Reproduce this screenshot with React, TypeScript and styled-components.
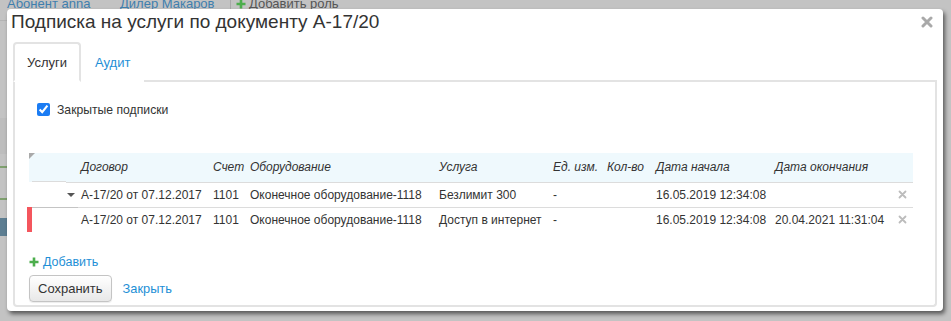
import React from "react";
import styled, { createGlobalStyle } from "styled-components";

const Global = createGlobalStyle`
  html, body { margin: 0; padding: 0; }
  body {
    width: 951px; height: 321px; overflow: hidden;
    font-family: "Liberation Sans", Arial, Helvetica, sans-serif;
    color: #333;
    background: #c4c4c4;
  }
`;

const Page = styled.div`
  position: relative;
  width: 951px;
  height: 321px;
  overflow: hidden;
  background: #c3c3c3;
`;

const BackTop = styled.div`
  display: flex;
  align-items: flex-end;
  height: 9px;
  overflow: hidden;
  font-size: 13px;
  line-height: 16px;
`;

const BackLink = styled.span<{ $w: number; $ml?: number }>`
  color: #3f7fae;
  width: ${(p) => p.$w}px;
  margin-left: ${(p) => p.$ml ?? 0}px;
  flex: none;
  margin-bottom: -3px;
`;

const BackButton = styled.span`
  color: #555;
  border-left: 1px solid #a8a8a8;
  padding-left: 5px;
  margin-bottom: -3px;
  display: flex;
  align-items: center;
  gap: 3px;
`;

const BackLeft = styled.div`
  width: 7px;
  display: flex;
  flex-direction: column;
`;

const BackLine = styled.div<{ $h: number; $c: string; $mt: number }>`
  height: ${(p) => p.$h}px;
  background: ${(p) => p.$c};
  margin-top: ${(p) => p.$mt}px;
`;

const Modal = styled.div`
  position: absolute;
  left: 7px;
  top: 9px;
  width: 926px;
  height: 298px;
  padding: 0 5px 4px 5px;
  background: #fff;
  border-radius: 4px;
  box-shadow: 2px 3px 4px rgba(0, 0, 0, 0.55);
  display: flex;
  flex-direction: column;
`;

const Header = styled.div`
  display: flex;
  justify-content: space-between;
  align-items: flex-start;
  height: 33px;
`;

const Title = styled.h3`
  margin: 1px 0 0 -1px;
  font-size: 19px;
  line-height: 24px;
  font-weight: normal;
  color: #333;
`;

const CloseBtn = styled.button`
  border: 0;
  background: none;
  padding: 0;
  margin: 7px 5px 0 0;
  width: 12px;
  height: 12px;
  display: flex;
  cursor: pointer;
`;

const TabBar = styled.div`
  display: flex;
  border-bottom: 2px solid #e3e3e3;
  margin: 0 1px;
  height: 38px;
`;

const Tab = styled.div<{ $active?: boolean }>`
  box-sizing: border-box;
  height: 40px;
  padding: 1px 12px 0 12px;
  display: flex;
  align-items: center;
  font-size: 13px;
  margin-bottom: -2px;
  color: ${(p) => (p.$active ? "#333" : "#1e8fd6")};
  background: #fff;
  border: 2px solid ${(p) => (p.$active ? "#e3e3e3" : "transparent")};
  border-bottom: 2px solid ${(p) => (p.$active ? "#fff" : "transparent")};
  border-radius: 4px 4px 0 0;
`;

const Panel = styled.div`
  flex: 1;
  margin: 0 1px;
  border: 2px solid #e3e3e3;
  border-top: 0;
  border-radius: 0 0 4px 4px;
  display: flex;
  flex-direction: column;
  padding: 0 0 3px 0;
`;

const CheckRow = styled.label`
  display: flex;
  align-items: center;
  gap: 7px;
  margin: 21px 0 0 22px;
  height: 13px;
  font-size: 12.2px;
`;

const Check = styled.input`
  margin: 0;
  width: 13px;
  height: 13px;
  accent-color: #1b7cf3;
`;

const Table = styled.table`
  margin: 37px 0 0 14px;
  width: 884px;
  border-collapse: collapse;
  table-layout: fixed;
  font-size: 12px;
`;

const HeadRow = styled.tr`
  background: #eff9fd;
  height: 29px;
`;

const Th = styled.th`
  text-align: left;
  font-weight: normal;
  font-style: italic;
  padding: 0 0 0 3px;
  border-bottom: 1px solid #dcdcdc;
  white-space: nowrap;
  color: #333;
`;

const CornerTh = styled.th`
  padding: 0;
  vertical-align: top;
  background: linear-gradient(#dcdcdc, #dcdcdc) no-repeat 3px 100% / calc(100% - 3px) 1px;
`;

const Corner = styled.div`
  width: 0;
  height: 0;
  border-top: 6px solid #a9a9a9;
  border-right: 6px solid transparent;
`;

const Row = styled.tr`
  height: 25px;
`;

const Td = styled.td<{ $top?: boolean }>`
  padding: 0 0 0 3px;
  white-space: nowrap;
  border-top: ${(p) => (p.$top ? "1px solid #dcdcdc" : "0")};
  color: #333;
`;

const MarkTd = styled.td<{ $top?: boolean }>`
  padding: 0;
  ${(p) =>
    p.$top
      ? "background: linear-gradient(#c4c4c4, #c4c4c4) no-repeat 3px 0 / calc(100% - 3px) 1px;"
      : ""}
`;

const CaretTd = styled.td<{ $top?: boolean }>`
  padding: 0;
  border-top: ${(p) => (p.$top ? "1px solid #c4c4c4" : "0")};
`;

const Marker = styled.div`
  width: 5px;
  height: 25px;
  margin-left: -2px;
  background: #f4565d;
`;

const Caret = styled.div`
  width: 0;
  height: 0;
  margin-left: 1px;
  border-left: 4px solid transparent;
  border-right: 4px solid transparent;
  border-top: 4px solid #555;
`;

const DelTd = styled(Td)`
  padding: 0 0 0 8px;
`;

const Del = styled.button`
  border: 0;
  background: none;
  padding: 0;
  display: flex;
  cursor: pointer;
`;

const AddLink = styled.a`
  display: flex;
  align-items: center;
  gap: 4px;
  margin: 22px 0 0 14px;
  font-size: 12.5px;
  line-height: 16px;
  color: #1e8fd6;
  text-decoration: none;
  width: max-content;
`;

const Actions = styled.div`
  display: flex;
  align-items: center;
  gap: 11px;
  margin: 5px 0 0 14px;
`;

const Button = styled.button`
  font-family: inherit;
  font-size: 13px;
  color: #333;
  height: 27px;
  padding: 0 8px;
  border: 1px solid #c4c4c4;
  border-radius: 4px;
  background: linear-gradient(#ffffff, #e8e8e8);
  box-shadow: 0 1px 1px rgba(0, 0, 0, 0.08);
`;

const Link = styled.a`
  font-size: 12.8px;
  color: #1e8fd6;
  text-decoration: none;
`;

const XIcon = ({ size, color, w }: { size: number; color: string; w: number }) => (
  <svg width={size} height={size} viewBox="0 0 12 12">
    <path d="M2 2 L10 10 M10 2 L2 10" stroke={color} strokeWidth={w} strokeLinecap="round" />
  </svg>
);

const Plus = () => (
  <svg width="10" height="10" viewBox="0 0 10 10">
    <path d="M5 0.5 V9.5 M0.5 5 H9.5" stroke="#4cae4c" strokeWidth="2.6" />
  </svg>
);

type RowData = {
  marker?: boolean;
  caret?: boolean;
  top?: boolean;
  service: string;
  end: string;
};

const rows: RowData[] = [
  { caret: true, service: "Безлимит 300", end: "" },
  { marker: true, top: true, service: "Доступ в интернет", end: "20.04.2021 11:31:04" },
];

export default function App() {
  return (
    <Page>
      <Global />
      <BackTop>
        <BackLink $w={113} $ml={7}>Абонент anna</BackLink>
        <BackLink $w={110}>Дилер Макаров</BackLink>
        <BackButton>
          <Plus /> Добавить роль
        </BackButton>
      </BackTop>
      <BackLeft>
        <BackLine $h={1} $c="#b4b4b4" $mt={11} />
        <BackLine $h={36} $c="#bdbdbd" $mt={97} />
        <BackLine $h={2} $c="#7fa06f" $mt={12} />
        <BackLine $h={2} $c="#7fa06f" $mt={30} />
        <BackLine $h={18} $c="#5d7e92" $mt={18} />
      </BackLeft>
      <Modal>
        <Header>
          <Title>Подписка на услуги по документу А-17/20</Title>
          <CloseBtn aria-label="close">
            <XIcon size={12} color="#a9a9a9" w={3} />
          </CloseBtn>
        </Header>
        <TabBar>
          <Tab $active>Услуги</Tab>
          <Tab>Аудит</Tab>
        </TabBar>
        <Panel>
          <CheckRow>
            <Check type="checkbox" defaultChecked />
            Закрытые подписки
          </CheckRow>
          <Table>
            <colgroup>
              <col style={{ width: 37 }} />
              <col style={{ width: 12 }} />
              <col style={{ width: 132 }} />
              <col style={{ width: 37 }} />
              <col style={{ width: 189 }} />
              <col style={{ width: 114 }} />
              <col style={{ width: 54 }} />
              <col style={{ width: 49 }} />
              <col style={{ width: 119 }} />
              <col style={{ width: 118 }} />
              <col style={{ width: 23 }} />
            </colgroup>
            <thead>
              <HeadRow>
                <CornerTh>
                  <Corner />
                </CornerTh>
                <Th />
                <Th>Договор</Th>
                <Th>Счет</Th>
                <Th>Оборудование</Th>
                <Th>Услуга</Th>
                <Th>Ед. изм.</Th>
                <Th>Кол-во</Th>
                <Th>Дата начала</Th>
                <Th>Дата окончания</Th>
                <Th />
              </HeadRow>
            </thead>
            <tbody>
              {rows.map((r, i) => (
                <Row key={i}>
                  <MarkTd $top={r.top}>{r.marker && <Marker />}</MarkTd>
                  <CaretTd $top={r.top}>{r.caret && <Caret />}</CaretTd>
                  <Td $top={r.top}>А-17/20 от 07.12.2017</Td>
                  <Td $top={r.top}>1101</Td>
                  <Td $top={r.top}>Оконечное оборудование-1118</Td>
                  <Td $top={r.top}>{r.service}</Td>
                  <Td $top={r.top}>-</Td>
                  <Td $top={r.top}></Td>
                  <Td $top={r.top}>16.05.2019 12:34:08</Td>
                  <Td $top={r.top}>{r.end}</Td>
                  <DelTd $top={r.top}>
                    <Del aria-label="delete">
                      <XIcon size={9} color="#bcbcbc" w={2.4} />
                    </Del>
                  </DelTd>
                </Row>
              ))}
            </tbody>
          </Table>
          <AddLink href="#">
            <Plus />
            Добавить
          </AddLink>
          <Actions>
            <Button>Сохранить</Button>
            <Link href="#">Закрыть</Link>
          </Actions>
        </Panel>
      </Modal>
    </Page>
  );
}
